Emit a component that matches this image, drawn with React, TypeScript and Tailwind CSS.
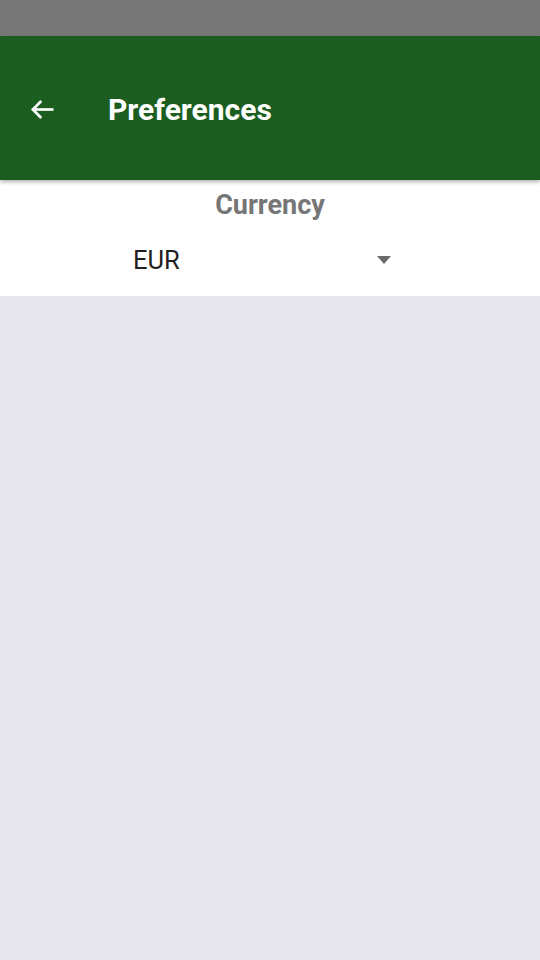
export default function App() {
  return (
    <div className="flex h-[960px] w-[540px] flex-col bg-[#e8e7ee] font-['Roboto',sans-serif]">
      <div className="h-[36px] bg-[#777777]" />
      <header className="relative z-10 flex h-[144px] items-center bg-[#1c5e20] shadow-[0_2px_4px_rgba(0,0,0,0.3)]">
        <button className="ml-[26px] mt-[2px] flex h-[32px] w-[32px] items-center justify-center text-white">
          <svg width="29" height="29" viewBox="0 0 24 24" fill="none" stroke="currentColor" strokeWidth="2.2" strokeLinecap="square">
            <path d="M20 12H5" />
            <path d="M11 5l-7 7 7 7" strokeLinecap="butt" />
          </svg>
        </button>
        <h1 className="ml-[50px] mt-[3px] text-[30px] font-bold text-white">Preferences</h1>
      </header>
      <section className="flex h-[116px] flex-col bg-white">
        <div className="mt-[8px] text-center text-[27px] font-bold leading-[34px] text-[#767676]">Currency</div>
        <div className="mt-[18px] flex h-[40px] items-center pl-[133px] pr-[149px]">
          <span className="flex-1 text-[25.5px] text-[#212121]">EUR</span>
          <span className="h-0 w-0 border-x-[7.5px] border-t-[8px] border-x-transparent border-t-[#6b6b6b]" />
        </div>
      </section>
    </div>
  );
}
